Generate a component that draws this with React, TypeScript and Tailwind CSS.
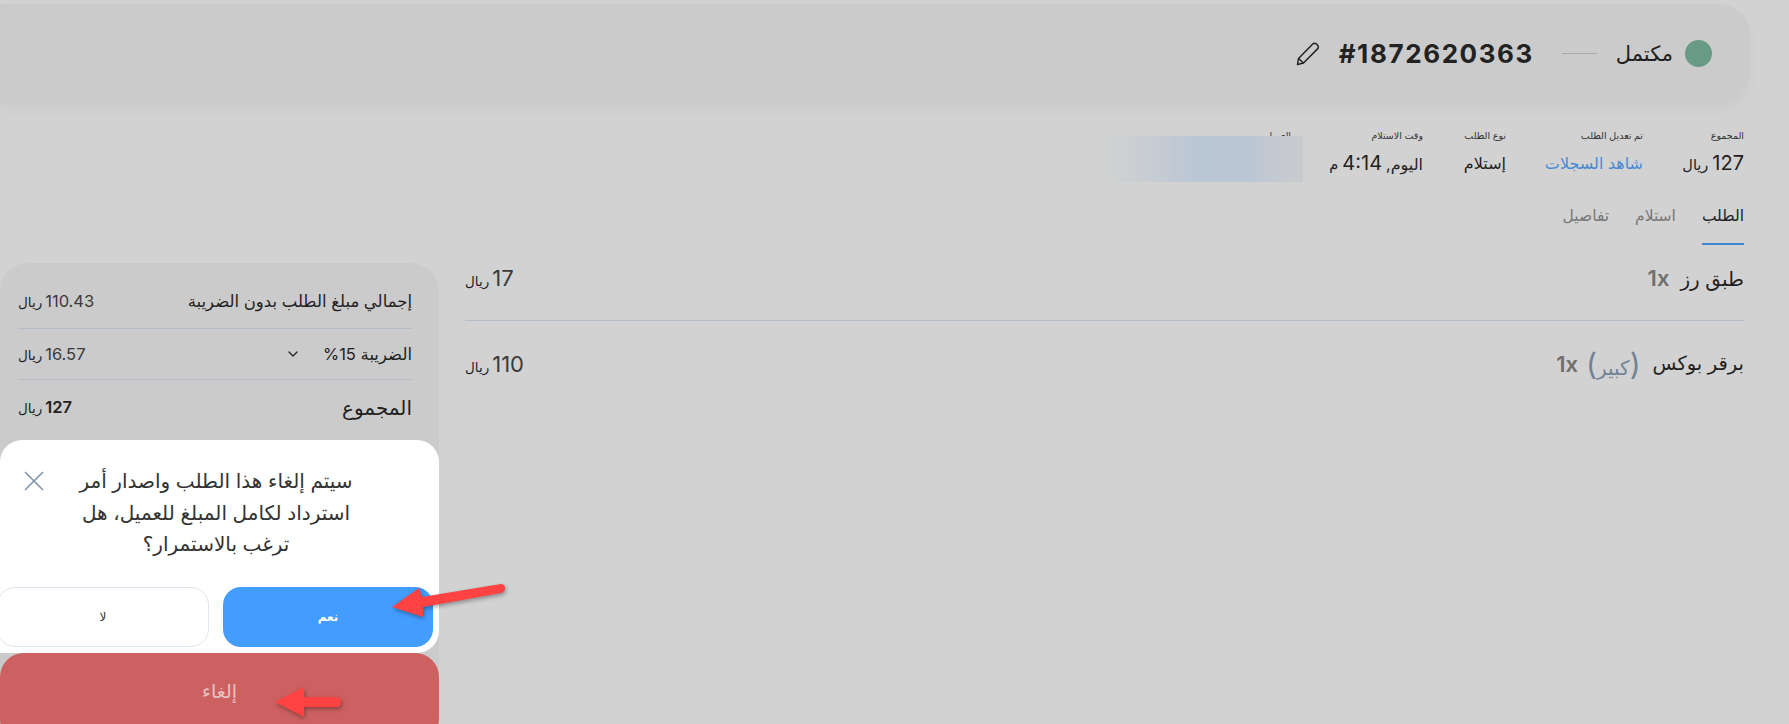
import { ChevronDown, X } from 'lucide-react';

const infoColumns = [
    { label: 'المجموع', number: '127', suffix: 'ريال', width: 'w-[101px]' },
    { label: 'تم تعديل الطلب', value: 'شاهد السجلات', link: true, width: 'w-[137px]' },
    { label: 'نوع الطلب', value: 'إستلام', width: 'w-[83px]' },
    { label: 'وقت الاستلام', value: 'اليوم,', number: '4:14', suffix: 'م', width: 'w-[132px]' },
];

function Riyal({ amount, bold = false, big = false }: { amount: string; bold?: boolean; big?: boolean }) {
    return (
        <span className="inline-flex items-baseline gap-[3px] text-[#1f1f1f]">
            <span className={`${big ? 'text-[22px]' : 'text-[16.5px]'} ${bold ? 'font-semibold text-[#222]' : 'text-[#3a3a3a]'}`}>{amount}</span>
            <span className="text-[13.5px]">ريال</span>
        </span>
    );
}

export default function App() {
    return (
        <div dir="rtl" className="relative h-[724px] overflow-hidden bg-[#d2d2d2] font-['Inter','DejaVu_Sans',sans-serif] text-[#1f1f1f]">
            {/* Header */}
            <div className="pt-1 pr-[39px]">
                <div className="flex h-[99px] items-center rounded-l-none rounded-r-[32px] bg-[#cbcbcb] pr-[38px] shadow-[0_6px_14px_rgba(0,0,0,0.03)]">
                    <span className="h-[27px] w-[27px] shrink-0 rounded-full bg-[#689a85]" />
                    <span className="mr-[12px] w-[56px] text-[21px] whitespace-nowrap">مكتمل</span>
                    <span className="mr-[20px] h-px w-[35px] bg-[#a3abb5]" />
                    <span dir="ltr" className="mr-[28px] text-[26px] leading-none font-bold tracking-[1.6px] text-[#222]">#1872620363</span>
                    <svg className="mr-[19px] h-[24px] w-[24px]" viewBox="0 0 24 24" fill="none" stroke="#222" strokeWidth="1.5" strokeLinejoin="round">
                        <path d="M1.5 22.5 L2.5 16.5 L17 1.8 Q18.6 0.6 20.6 2.2 L21.6 3.2 Q23 5 21.8 6.6 L7.5 21 Z" />
                        <path d="M2.5 16.5 L7.5 21" />
                    </svg>
                </div>
            </div>

            {/* Order info */}
            <div className="relative mt-[26px] flex pr-[45px]">
                {infoColumns.map((col) => (
                    <div key={col.label} className={col.width}>
                        <div className="text-[9.5px] leading-[14px] text-[#333]">{col.label}</div>
                        <div className={`mt-[9px] flex items-baseline gap-1 text-[16px] leading-[22px] ${col.link ? 'text-[#4a8ad4]' : 'text-[#222]'}`}>
                            {col.value && <span className="whitespace-nowrap">{col.value}</span>}
                            {col.number && <span className="text-[20px]">{col.number}</span>}
                            {col.suffix && <span className="text-[14.5px]">{col.suffix}</span>}
                        </div>
                    </div>
                ))}
                <div className="text-[9.5px] leading-[14px] text-[#333]">العميل</div>
                <div className="absolute top-[7px] left-[1100px] h-[46px] w-[203px] bg-[linear-gradient(90deg,#d1d2d2_0%,#cdd0d2_12%,#c6ccd3_28%,#b9c6d4_48%,#bac6d4_72%,#c6cad0_90%,#c8cacc_100%)]" />
            </div>

            {/* Tabs */}
            <div className="mt-[29px] flex gap-[26px] pr-[45px] text-[15.5px]">
                <div className="border-b-2 border-[#3f84d2] pb-[16px] leading-[22px] text-[#222]">الطلب</div>
                <div className="leading-[22px] text-[#777]">استلام</div>
                <div className="leading-[22px] text-[#777]">تفاصيل</div>
            </div>

            <div className="flex">
                {/* Items */}
                <div className="flex-1 pr-[45px] pl-[26px]">
                    <div className="flex h-[76px] items-center justify-between border-b border-[#b4bec9] pb-[8px]">
                        <div className="flex items-center gap-[11px] text-[20px]">
                            <span>طبق رز</span>
                            <span className="text-[22px] font-semibold text-[#6f6f6f]" dir="ltr">1x</span>
                        </div>
                        <Riyal amount="17" big />
                    </div>
                    <div className="flex h-[86px] items-center justify-between">
                        <div className="flex items-center gap-[8px] text-[19.5px]">
                            <span className="ml-[4px]">برقر بوكس</span>
                            <span className="text-[30px] leading-none text-[#728396]">(<span className="text-[20px]">كبير</span>)</span>
                            <span className="text-[22px] font-semibold text-[#6f6f6f]" dir="ltr">1x</span>
                        </div>
                        <Riyal amount="110" big />
                    </div>
                </div>

                {/* Summary */}
                <aside className="relative mt-[18px] h-[461px] w-[439px] rounded-t-[28px] bg-[#cbcbcb] px-[27px] pl-[18px]">
                    <div className="flex h-[66px] items-center justify-between border-b border-[#b4bec9] pt-[12px] text-[16.5px]">
                        <span>إجمالي مبلغ الطلب بدون الضريبة</span>
                        <Riyal amount="110.43" />
                    </div>
                    <div className="flex h-[51px] items-center justify-between border-b border-[#b4bec9] text-[16.5px]">
                        <span className="flex items-center gap-[22px]">
                            الضريبة 15%
                            <ChevronDown className="h-[16px] w-[16px]" strokeWidth={1.8} />
                        </span>
                        <Riyal amount="16.57" />
                    </div>
                    <div className="flex h-[55px] items-center justify-between text-[20px]">
                        <span>المجموع</span>
                        <Riyal amount="127" bold />
                    </div>

                    {/* Confirm dialog */}
                    <div className="absolute top-[177px] right-0 left-0 h-[213px] rounded-[22px] rounded-bl-none bg-white">
                        <div className="flex pt-[26px] pr-[68px] pl-[17px]">
                            <p className="flex-1 text-center text-[20px] leading-[31.5px] text-[#333]">
                                سيتم إلغاء هذا الطلب واصدار أمر استرداد لكامل المبلغ للعميل، هل ترغب بالاستمرار؟
                            </p>
                            <X className="mt-[-2px] mr-[10px] h-[34px] w-[34px] shrink-0 text-[#8296ae]" strokeWidth={1.2} />
                        </div>
                        <div className="absolute right-[6px] bottom-[6px] left-[-3px] flex gap-[14px]">
                            <button className="h-[60px] flex-1 rounded-[18px] bg-[#429dff] text-[12px] font-bold text-white">نعم</button>
                            <button className="h-[60px] flex-1 rounded-[18px] border border-[#dce6f0] bg-white text-[12px] text-[#333]">لا</button>
                        </div>
                    </div>
                    <button className="absolute top-[390px] right-0 left-0 h-[90px] rounded-[24px] bg-[#cd6161] pb-[12px] text-[19px] text-[#e6c3c3]">إلغاء</button>
                </aside>
            </div>

            {/* Annotation arrows */}
            <svg className="pointer-events-none absolute top-0 left-0 drop-shadow-[1px_2px_2px_rgba(0,0,0,0.35)]" width="520" height="724" fill="#ff4343">
                <path d="M392 607 L419 588 L422 597 L501 584 Q505 584 505 588 Q505 592 501 593 L423 607 L423 617 Z" />
                <path d="M275 702 L304 687 L304 697 L336 697 Q341 697 341 702 Q341 707 336 707 L304 707 L304 717 Z" />
            </svg>
        </div>
    );
}
